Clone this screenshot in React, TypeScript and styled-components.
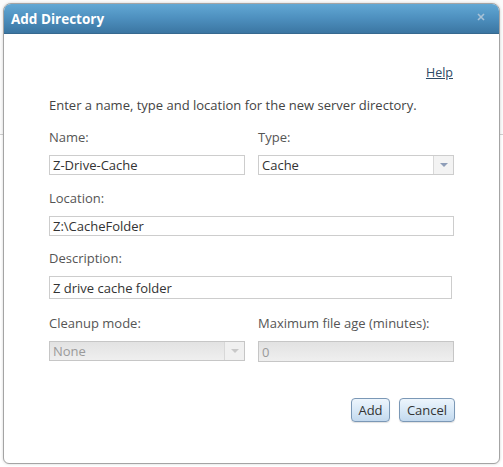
import React from "react";
import styled, { createGlobalStyle } from "styled-components";

const GlobalStyle = createGlobalStyle`
  html, body {
    margin: 0;
    padding: 0;
    background: linear-gradient(to bottom, #fbfbfb 0, #fbfbfb 134px, #cfcfcf 134px, #cfcfcf 135px, #ffffff 135px);
    font-family: "Open Sans", "Liberation Sans", sans-serif;
  }
`;

const Page = styled.div`
  width: 503px;
  height: 467px;
  padding: 3px 3px 0 3px;
  box-sizing: border-box;
`;

const Dialog = styled.div`
  width: 497px;
  height: 461px;
  box-sizing: border-box;
  background: #ffffff;
  border: 1px solid #a4a4a4;
  border-radius: 8px 8px 6px 6px;
  box-shadow: 0 0 3px rgba(0, 0, 0, 0.18);
  overflow: hidden;
  display: flex;
  flex-direction: column;
`;

const TitleBar = styled.div`
  height: 29px;
  background: linear-gradient(to bottom, #62a8d4 0%, #4d8fbe 50%, #3b76a2 100%);
  border-bottom: 1px solid #36698f;
  display: flex;
  align-items: center;
  justify-content: space-between;
  padding: 0 14px 0 7px;
`;

const Title = styled.span`
  color: #ffffff;
  font-size: 13.5px;
  font-weight: 700;
`;

const Close = styled.span`
  display: flex;
  width: 8px;
  height: 8px;
  margin-top: -4px;
`;

const Body = styled.div`
  padding: 30px 44px 0 45px;
  display: flex;
  flex-direction: column;
`;

const HelpRow = styled.div`
  display: flex;
  justify-content: flex-end;
  padding-right: 2px;
  line-height: 18px;
`;

const HelpLink = styled.a`
  color: #2c4a66;
  font-size: 12.5px;
  text-decoration: underline;
  cursor: pointer;
`;

const Intro = styled.p`
  margin: 14px 0 14px;
  color: #444;
  font-size: 13px;
  line-height: 18px;
`;

const Row = styled.div<{ $cols: number; $gap: number }>`
  display: grid;
  grid-template-columns: ${({ $cols }) => ($cols === 2 ? "196px 196px" : "405px")};
  column-gap: 13px;
  margin-bottom: ${({ $gap }) => $gap}px;
`;

const Field = styled.div`
  display: flex;
  flex-direction: column;
`;

const Label = styled.label`
  color: #555;
  font-size: 13px;
  line-height: 18px;
  margin-bottom: 9px;
`;

const Box = styled.div<{ $disabled?: boolean; $h?: number; $w?: number }>`
  height: ${({ $h }) => $h ?? 20}px;
  width: ${({ $w }) => ($w ? `${$w}px` : "auto")};
  box-sizing: border-box;
  border: 1px solid ${({ $disabled }) => ($disabled ? "#c6c6c6" : "#cdcdcd")};
  background: ${({ $disabled }) =>
    $disabled ? "linear-gradient(to bottom, #e2e2e2, #efefef)" : "#ffffff"};
  color: ${({ $disabled }) => ($disabled ? "#9a9a9a" : "#333")};
  font-size: 13px;
  display: flex;
  align-items: center;
  padding-left: 3px;
`;

const Value = styled.span`
  flex: 1;
  white-space: nowrap;
`;

const Arrow = styled.span<{ $disabled?: boolean }>`
  width: 19px;
  align-self: stretch;
  border-left: 1px solid #d8d8d8;
  background: ${({ $disabled }) => ($disabled ? "#f0f0f0" : "#f3f3f3")};
  display: flex;
  align-items: center;
  justify-content: center;
  &::after {
    content: "";
    border-left: 4px solid transparent;
    border-right: 4px solid transparent;
    border-top: 4px solid ${({ $disabled }) => ($disabled ? "#c8c8c8" : "#8e9db8")};
  }
`;

const Buttons = styled.div`
  display: flex;
  justify-content: flex-end;
  gap: 9px;
  margin-top: 36px;
`;

const Button = styled.button<{ $w: number }>`
  width: ${({ $w }) => $w}px;
  height: 24px;
  border: 1px solid #7b98b6;
  border-radius: 4px;
  background: linear-gradient(to bottom, #edf5fc 0%, #d6e7f6 55%, #c3d9ee 100%);
  color: #333;
  font-family: "Open Sans", "Liberation Sans", sans-serif;
  font-size: 13px;
  padding: 0;
  box-shadow: 0 1px 1px rgba(0, 0, 0, 0.12);
`;

const Select = ({ value, disabled }: { value: string; disabled?: boolean }) => (
  <Box $disabled={disabled} style={{ paddingRight: 0 }}>
    <Value>{value}</Value>
    <Arrow $disabled={disabled} />
  </Box>
);

export default function App() {
  return (
    <Page>
      <GlobalStyle />
      <Dialog>
        <TitleBar>
          <Title>Add Directory</Title>
          <Close>
            <svg width="8" height="8" viewBox="0 0 8 8">
              <path d="M1 1L7 7M7 1L1 7" stroke="#a9c2d6" strokeWidth="1.6" />
            </svg>
          </Close>
        </TitleBar>
        <Body>
          <HelpRow>
            <HelpLink>Help</HelpLink>
          </HelpRow>
          <Intro>Enter a name, type and location for the new server directory.</Intro>
          <Row $cols={2} $gap={14}>
            <Field>
              <Label>Name:</Label>
              <Box>
                <Value>Z-Drive-Cache</Value>
              </Box>
            </Field>
            <Field>
              <Label>Type:</Label>
              <Select value="Cache" />
            </Field>
          </Row>
          <Row $cols={1} $gap={13}>
            <Field>
              <Label>Location:</Label>
              <Box>
                <Value>Z:\CacheFolder</Value>
              </Box>
            </Field>
          </Row>
          <Row $cols={1} $gap={15}>
            <Field>
              <Label>Description:</Label>
              <Box $h={23} $w={403}>
                <Value>Z drive cache folder</Value>
              </Box>
            </Field>
          </Row>
          <Row $cols={2} $gap={0}>
            <Field>
              <Label>Cleanup mode:</Label>
              <Select value="None" disabled />
            </Field>
            <Field>
              <Label>Maximum file age (minutes):</Label>
              <Box $disabled $h={21}>
                <Value>0</Value>
              </Box>
            </Field>
          </Row>
          <Buttons>
            <Button $w={39}>Add</Button>
            <Button $w={56}>Cancel</Button>
          </Buttons>
        </Body>
      </Dialog>
    </Page>
  );
}
